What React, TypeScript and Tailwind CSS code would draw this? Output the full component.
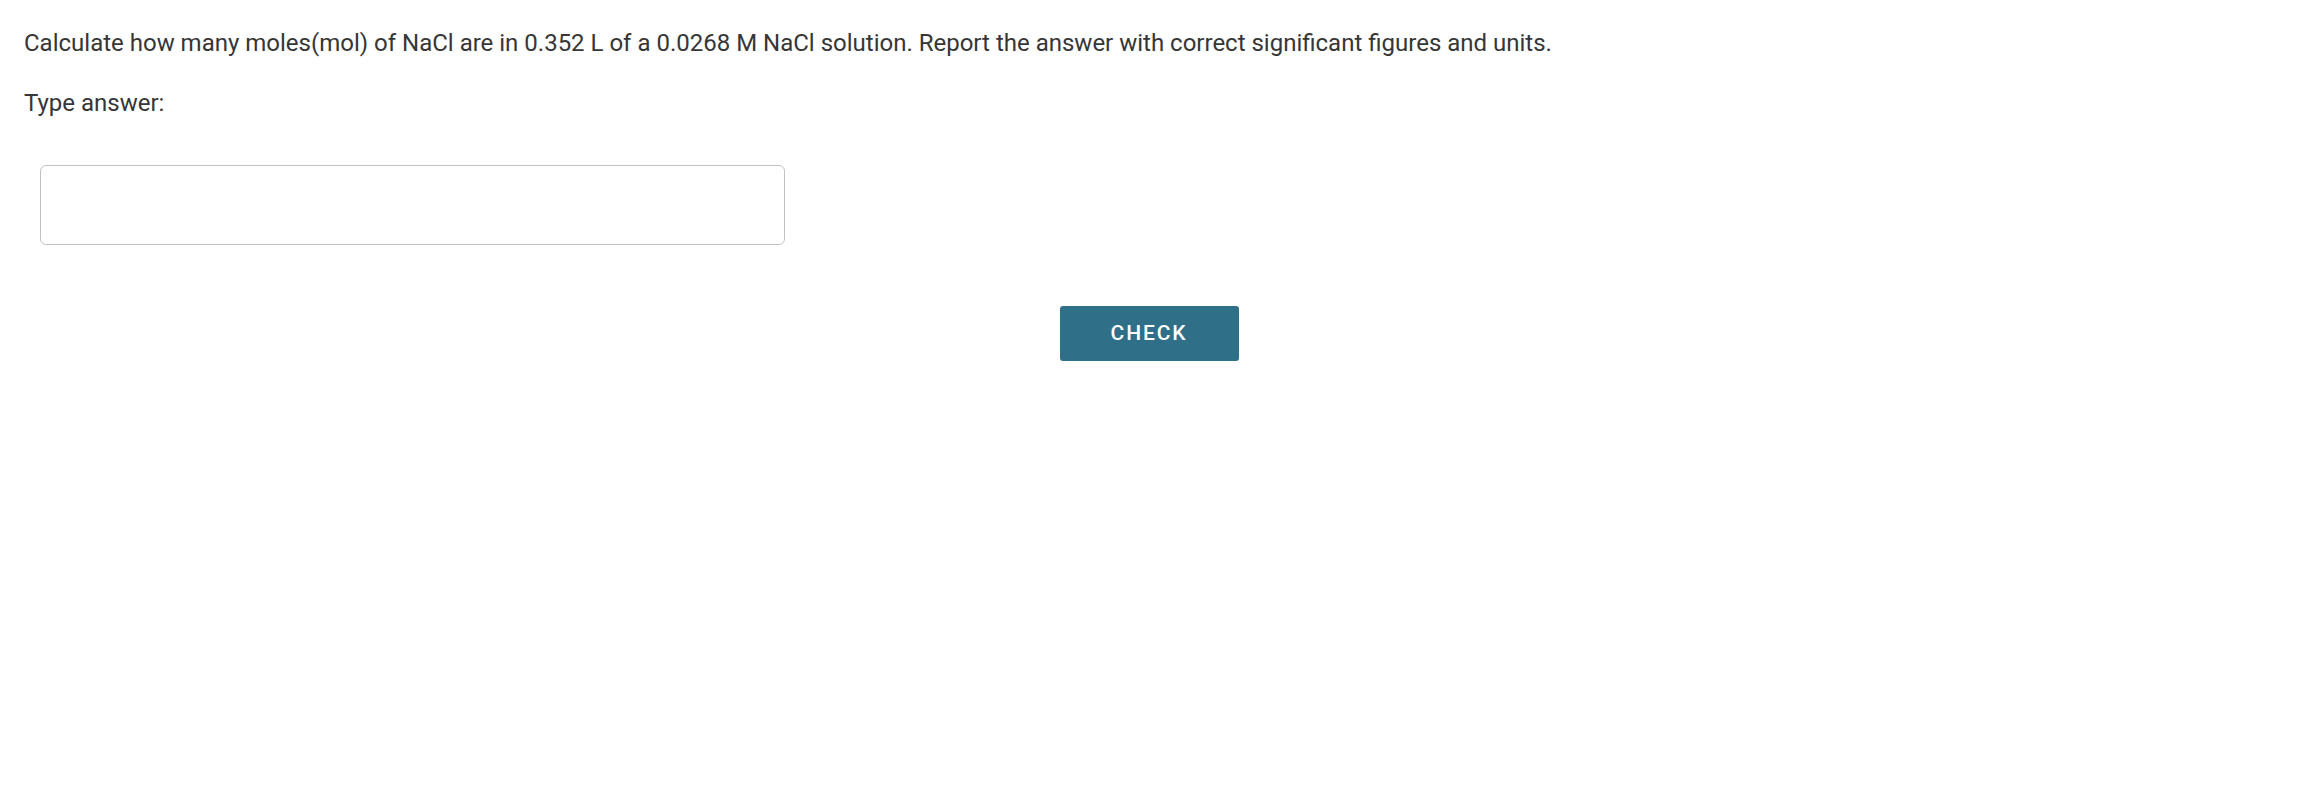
export default function App() {
  return (
    <div className="min-h-screen bg-white pl-6 pt-[25px] font-['Roboto',sans-serif] text-[#363636]">
      {/* Question */}
      <p className="text-[24px] leading-[36px]">
        Calculate how many moles(mol) of NaCl are in 0.352 L of a 0.0268 M NaCl solution. Report the answer with correct
        significant figures and units.
      </p>
      <p className="mt-6 text-[24px] leading-[36px]">Type answer:</p>

      {/* Answer input */}
      <div className="ml-4 mt-[44px]">
        <input
          type="text"
          className="h-[80px] w-[745px] rounded-[6px] border border-[#c2c2c2] bg-white px-4 text-[24px] outline-none"
        />
      </div>

      {/* Check button, centred on the page */}
      <div className="-ml-6 mt-[61px] flex justify-center">
        <button className="h-[55px] w-[179px] rounded-[3px] bg-[#306f88] text-[21px] font-medium tracking-[0.09em] text-white">
          CHECK
        </button>
      </div>
    </div>
  );
}
